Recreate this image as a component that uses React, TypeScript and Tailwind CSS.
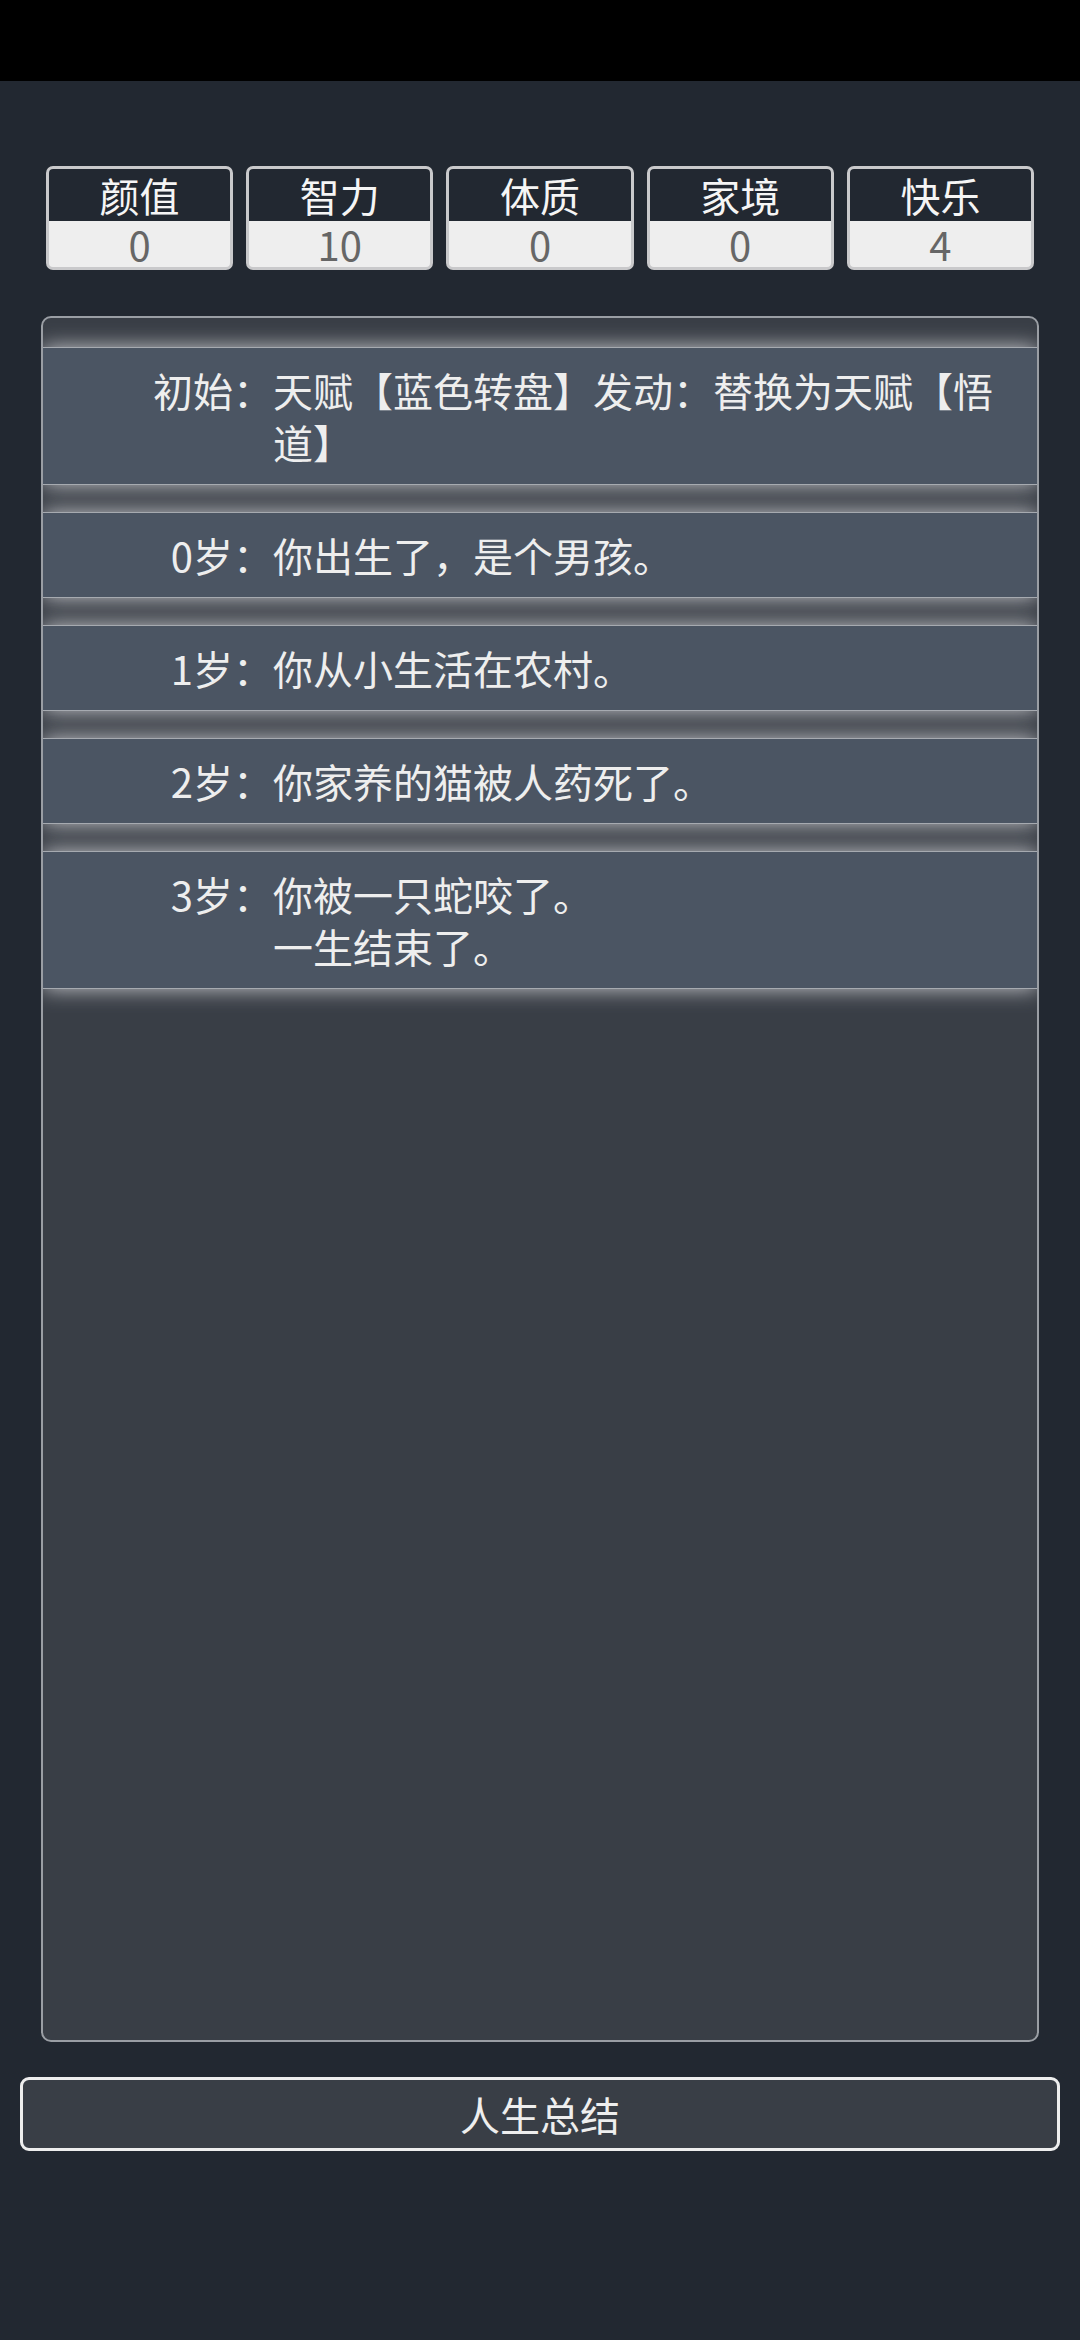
const stats = [
  { name: "颜值", value: 0 },
  { name: "智力", value: 10 },
  { name: "体质", value: 0 },
  { name: "家境", value: 0 },
  { name: "快乐", value: 4 },
];

const trajectory = [
  { age: "初始", lines: ["天赋【蓝色转盘】发动：替换为天赋【悟道】"] },
  { age: "0岁", lines: ["你出生了，是个男孩。"] },
  { age: "1岁", lines: ["你从小生活在农村。"] },
  { age: "2岁", lines: ["你家养的猫被人药死了。"] },
  { age: "3岁", lines: ["你被一只蛇咬了。", "一生结束了。"] },
];

export default function App() {
  return (
    <main
      className="min-h-[2340px] w-[1080px] bg-[#222831] text-[#eeeeee]"
      style={{ fontFamily: '"Noto Sans CJK SC", "Noto Sans", sans-serif' }}
    >
      {/* status bar */}
      <div className="h-[81px] bg-black"></div>

      {/* stats */}
      <div className="grid grid-cols-5 gap-[13px] px-[46px] pt-[85px]">
        {stats.map((s) => (
          <div
            key={s.name}
            className="rounded-[7px] border-[3px] border-[#c9c9cb] bg-[#eeeeee] text-center text-[40px]"
          >
            <div className="flex h-[52px] items-center justify-center rounded-t-[4px] bg-[#222831] text-[#f5f5f5]">
              {s.name}
            </div>
            <div className="flex h-[46px] items-center justify-center rounded-b-[4px] text-[#666666]">
              {s.value}
            </div>
          </div>
        ))}
      </div>

      {/* life trajectory */}
      <div className="mx-[41px] mt-[46px] h-[1726px] overflow-hidden rounded-[10px] border-2 border-[#9a9ea4] bg-[#393e46] pt-[29px]">
        <ul className="flex flex-col gap-[27px]">
          {trajectory.map((item) => (
            <li
              key={item.age}
              className="flex border-y border-[#a6aab0] bg-[#4b5563] py-[16px] pr-[20px] text-[40px] leading-[52px] shadow-[0_0_20px_rgba(225,225,228,0.85)]"
            >
              <span className="w-[230px] shrink-0 text-right">{item.age}：</span>
              <span className="flex-1">
                {item.lines.map((l) => (
                  <div key={l}>{l}</div>
                ))}
              </span>
            </li>
          ))}
        </ul>
      </div>

      {/* summary button */}
      <div className="px-[20px] pt-[35px]">
        <button className="h-[74px] w-full rounded-[9px] border-[3px] border-[#eeeeee] bg-[#393e46] text-[40px] text-[#eeeeee]">
          人生总结
        </button>
      </div>
    </main>
  );
}
